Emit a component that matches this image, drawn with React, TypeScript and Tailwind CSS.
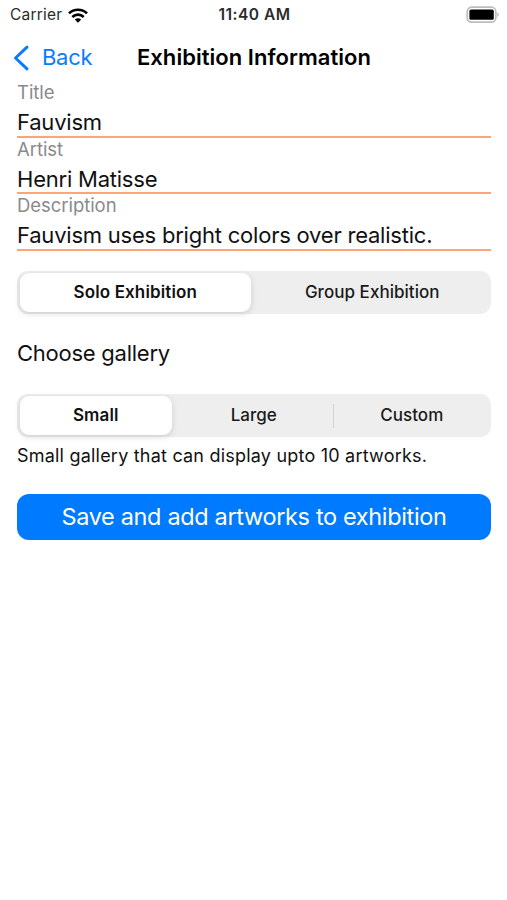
import { useState } from "react";

const fields = [
  { label: "Title", value: "Fauvism" },
  { label: "Artist", value: "Henri Matisse" },
  { label: "Description", value: "Fauvism uses bright colors over realistic." },
];

function StatusBar() {
  return (
    <div className="grid h-[30px] grid-cols-[1fr_auto_1fr] items-center pr-[8px] pl-[10px] text-[#2b2b2b]">
      <div className="flex items-center gap-[6px]">
        <span className="text-[15.5px] tracking-[0.2px]">Carrier</span>
        <svg width="20" height="15" viewBox="0 0 20 15" fill="none" stroke="#000" strokeWidth="2.7">
          <path d="M1 5.4C6 .5 14 .5 19 5.4" />
          <path d="M4.3 8.9c3.3-3.1 8.1-3.1 11.4 0" />
          <path d="M10 14.7l-3.2-3.3c1.8-1.7 4.6-1.7 6.4 0z" fill="#000" stroke="none" />
        </svg>
      </div>
      <span className="text-[15.5px] font-semibold tracking-[0.5px] whitespace-nowrap">11:40 AM</span>
      <svg className="justify-self-end" width="33" height="18" viewBox="0 0 33 18">
        <rect x="1.2" y="1.2" width="28.6" height="15" rx="4.5" fill="#fff" stroke="#bdbdbd" strokeWidth="1.7" />
        <rect x="3.4" y="3.6" width="24.4" height="10.2" rx="1.6" fill="#000" />
        <path d="M31.4 6.6c1.6.6 1.6 3.8 0 4.4z" fill="#a8a8a8" />
      </svg>
    </div>
  );
}

function Segmented({ options, initial }: { options: string[]; initial: string }) {
  const [selected, setSelected] = useState(initial);
  const current = options.indexOf(selected);

  return (
    <div className="flex h-[43px] rounded-[11px] bg-[#eeeeee]">
      {options.map((option, i) => (
        <div
          key={option}
          className={
            i > 0 && i - 1 !== current && i !== current
              ? "relative flex-1 py-[2px] pr-[3px] pl-[2.5px] before:absolute before:top-[10px] before:left-0 before:h-6 before:w-px before:bg-[#d2d2d4]"
              : "relative flex-1 py-[2px] pr-[3px] pl-[2.5px]"
          }
        >
          <button
            type="button"
            onClick={() => setSelected(option)}
            className={
              option === selected
                ? "h-[39px] w-full rounded-[9px] bg-white text-[17px] font-semibold tracking-[0.13px] shadow-[0_2px_6px_rgba(0,0,0,0.14)]"
                : "h-[39px] w-full text-[17px] font-medium tracking-[0.04px] text-[#1a1a1a]"
            }
          >
            {option}
          </button>
        </div>
      ))}
    </div>
  );
}

export default function App() {
  return (
    <div className="min-h-[900px] w-[507px] bg-white font-['Inter',sans-serif] text-[#111]">
      <StatusBar />
      <header className="grid h-[55px] grid-cols-[1fr_auto_1fr] items-center pl-[13px] pr-[12px]">
        <button type="button" className="flex items-center gap-[12px] text-[22px] tracking-[-0.3px] text-[#087cff]">
          <svg width="17" height="26" viewBox="0 0 17 26" fill="none" stroke="currentColor" strokeWidth="3" strokeLinecap="round" strokeLinejoin="round">
            <path d="M14 2.2L2.5 13 14 23.8" />
          </svg>
          Back
        </button>
        <h1 className="text-[22px] font-semibold tracking-[0.04px] text-black">Exhibition Information</h1>
      </header>

      <main className="pr-[16px] pl-[17px]">
        {fields.map((field) => (
          <div key={field.label} className="h-[56.5px]">
            <p className="h-[14px] text-[18.5px] leading-[15px] tracking-[-0.05px] text-[#8a8a8d]">{field.label}</p>
            <p className="h-[38.5px] border-b-2 border-[#fba676] pt-[10px] text-[22px] leading-[27px] tracking-[-0.22px]">{field.value}</p>
          </div>
        ))}

        <div className="mt-[16.5px]">
          <Segmented options={["Solo Exhibition", "Group Exhibition"]} initial="Solo Exhibition" />
        </div>
        <h2 className="mt-[23px] text-[22px] leading-8 tracking-[-0.25px]">Choose gallery</h2>
        <div className="mt-[25px]">
          <Segmented options={["Small", "Large", "Custom"]} initial="Small" />
        </div>
        <p className="mt-[7px] text-[18px] leading-6 tracking-[0.21px]">Small gallery that can display upto 10 artworks.</p>
        <button type="button" className="mt-[25.5px] h-[46px] w-full rounded-[12px] bg-[#007aff] text-[23.5px] tracking-[-0.35px] text-white">
          Save and add artworks to exhibition
        </button>
      </main>
    </div>
  );
}
